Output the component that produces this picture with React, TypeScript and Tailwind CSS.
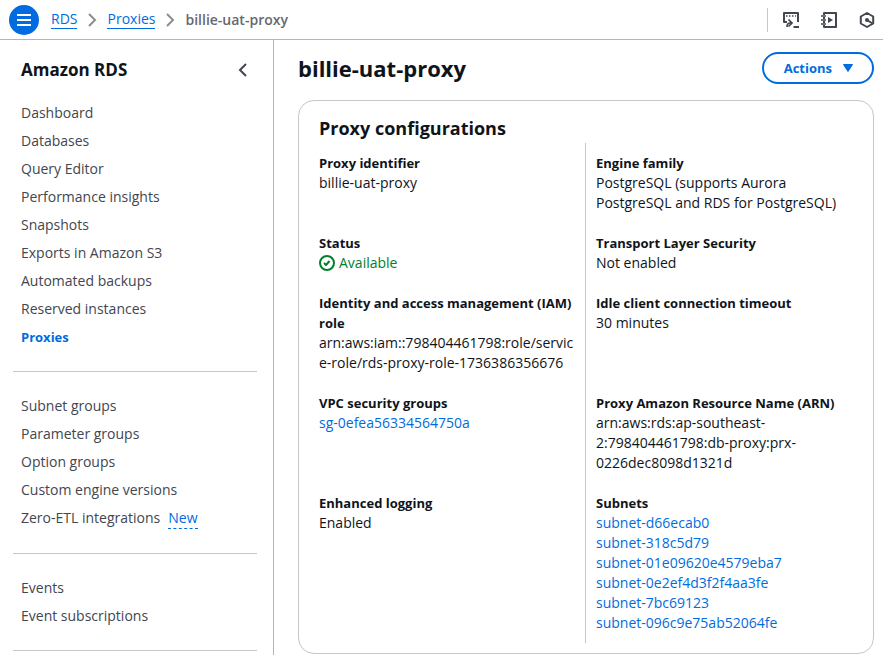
import type { ReactNode } from "react";

type NavItem = { label: string; current?: boolean; isNew?: boolean };

const navSections: NavItem[][] = [
  [
    { label: "Dashboard" },
    { label: "Databases" },
    { label: "Query Editor" },
    { label: "Performance insights" },
    { label: "Snapshots" },
    { label: "Exports in Amazon S3" },
    { label: "Automated backups" },
    { label: "Reserved instances" },
    { label: "Proxies", current: true },
  ],
  [
    { label: "Subnet groups" },
    { label: "Parameter groups" },
    { label: "Option groups" },
    { label: "Custom engine versions" },
    { label: "Zero-ETL integrations", isNew: true },
  ],
  [{ label: "Events" }, { label: "Event subscriptions" }],
];

const subnets = [
  "subnet-d66ecab0",
  "subnet-318c5d79",
  "subnet-01e09620e4579eba7",
  "subnet-0e2ef4d3f2f4aa3fe",
  "subnet-7bc69123",
  "subnet-096c9e75ab52064fe",
];

function Separator() {
  return (
    <svg className="size-4 shrink-0" viewBox="0 0 16 16" fill="none" stroke="#8c8c94" strokeWidth="2" aria-hidden="true">
      <path d="m5 2 6 6-6 6" />
    </svg>
  );
}

function CloudShellIcon() {
  return (
    <svg className="size-4" viewBox="0 0 16 16" fill="none" stroke="currentColor" strokeWidth="2" aria-hidden="true">
      <path d="M4 10H1V1h14v9" strokeLinejoin="round" />
      <path d="M3 4h1.500M6 4h1.500M9 4h1.500M12 4h1" strokeWidth="1.500" />
      <path d="M4 15c0-2.500 1-4 3-4h1.500M5.500 7.500 9 11l-3.500 3.500" strokeWidth="1.700" />
      <path d="M10.500 15H16" />
    </svg>
  );
}

function NotebookIcon() {
  return (
    <svg className="size-4" viewBox="0 0 16 16" fill="none" stroke="currentColor" strokeWidth="2" aria-hidden="true">
      <path d="M3 3V1h12v14H3v-2M3 5v2M3 9v2" strokeLinejoin="round" />
      <path d="M0 4h5M0 8h5M0 12h5" strokeWidth="1.700" />
      <path d="m7 5 5 3-5 3z" fill="currentColor" stroke="none" />
    </svg>
  );
}

function HexagonIcon() {
  return (
    <svg className="size-4" viewBox="0 0 16 16" fill="none" stroke="currentColor" strokeWidth="2" aria-hidden="true">
      <path d="m8 1 6.200 3.500v7L8 15l-6.200-3.500v-7z" strokeLinejoin="round" />
      <circle cx="8" cy="8" r="2" fill="currentColor" stroke="none" />
      <path d="m8 8 5.500 3.500" />
    </svg>
  );
}

function Field({ label, side, children }: { label: string; side: "left" | "right"; children: ReactNode }) {
  return (
    <div className={side === "left" ? "py-2.5 pr-2" : "-ml-px border-l border-[#c6c6cd] py-2.5 pl-2.5"}>
      <dt className="text-[13px] leading-5 font-bold">{label}</dt>
      <dd>{children}</dd>
    </div>
  );
}

export default function App() {
  return (
    <div className="flex min-h-screen flex-col bg-white font-['Open_Sans',sans-serif] text-sm leading-5 text-[#0f141a]">
      <header className="flex h-10 items-center border-b border-[#b4b4bb] pr-2 pl-[9px]">
        <button type="button" aria-label="Open navigation" className="flex size-[30px] shrink-0 items-center justify-center rounded-full bg-[#006ce0] text-white">
          <svg className="size-4" viewBox="0 0 16 16" stroke="currentColor" strokeWidth="2" aria-hidden="true">
            <path d="M1 3h14M1 8h14M1 13h14" />
          </svg>
        </button>
        <nav aria-label="Breadcrumb" className="ml-3 flex grow items-center gap-[7px] leading-[18px]">
          <a href="#rds" className="border-b border-[#006ce0] text-[#006ce0]">RDS</a>
          <Separator />
          <a href="#proxies" className="border-b border-[#006ce0] text-[#006ce0]">Proxies</a>
          <Separator />
          <span className="font-semibold text-[#656871]">billie-uat-proxy</span>
        </nav>
        <div className="flex h-6 items-center gap-[22px] border-l border-[#c6c6cd] pl-[15px] text-[#424650]">
          <button type="button" aria-label="CloudShell"><CloudShellIcon /></button>
          <button type="button" aria-label="Tutorials"><NotebookIcon /></button>
          <button type="button" aria-label="Resource assistant"><HexagonIcon /></button>
        </div>
      </header>

      <div className="flex grow">
        <aside className="w-[274px] shrink-0 border-r border-[#b4b4bb] pr-4 pl-[13px]">
          <div className="flex items-center justify-between pt-[18px] pr-1.5 pb-[21px] pl-2">
            <h2 className="text-[17px] leading-6 font-bold">Amazon RDS</h2>
            <button type="button" aria-label="Close navigation" className="text-[#424650]">
              <svg className="size-4" viewBox="0 0 16 16" fill="none" stroke="currentColor" strokeWidth="2" aria-hidden="true">
                <path d="M11 2 5 8l6 6" />
              </svg>
            </button>
          </div>
          <nav aria-label="Amazon RDS">
            {navSections.map((items) => (
              <ul key={items[0].label} className="mb-6 flex flex-col gap-2 border-b border-[#c6c6cd] pb-6 pl-2">
                {items.map((item) => (
                  <li key={item.label} className="flex gap-2">
                    <a href="#nav" className={item.current ? "text-[13px] leading-5 font-bold text-[#006ce0]" : "text-[#424650]"}>{item.label}</a>
                    {item.isNew && (
                      <button type="button" className="border-b border-dashed border-[#006ce0] text-[#006ce0]">New</button>
                    )}
                  </li>
                ))}
              </ul>
            ))}
          </nav>
        </aside>

        <main className="min-w-0 grow pt-3 pr-[9px] pl-6">
          <div className="flex items-start justify-between">
            <h1 className="text-[22px] leading-8 font-bold">billie-uat-proxy</h1>
            <button type="button" className="flex h-8 items-center gap-2 rounded-full border-2 border-[#006ce0] pr-4 pl-5 text-[13px] leading-5 font-bold text-[#006ce0]">
              Actions
              <svg className="size-4" viewBox="0 0 16 16" fill="currentColor" stroke="currentColor" strokeWidth="1" strokeLinejoin="round" aria-hidden="true">
                <path d="M3.500 4.500h9L8 11.500z" />
              </svg>
            </button>
          </div>
          <section className="mt-4 rounded-2xl border border-[#c6c6cd] px-5 pt-[15px] pb-2.5">
            <h2 className="pb-[3px] text-lg leading-6 font-bold">Proxy configurations</h2>
            <dl className="grid grid-cols-2">
              <Field side="left" label="Proxy identifier">billie-uat-proxy</Field>
              <Field side="right" label="Engine family">PostgreSQL (supports Aurora PostgreSQL and RDS for PostgreSQL)</Field>
              <Field side="left" label="Status">
                <span className="flex items-center gap-1 text-[#00802f]">
                  <svg className="size-4" viewBox="0 0 16 16" fill="none" stroke="currentColor" strokeWidth="2" aria-hidden="true">
                    <circle cx="8" cy="8" r="7" />
                    <path d="m5 8 2 2 3.500-4" strokeLinejoin="round" />
                  </svg>
                  Available
                </span>
              </Field>
              <Field side="right" label="Transport Layer Security">Not enabled</Field>
              <Field side="left" label="Identity and access management (IAM) role">
                <span className="break-all">arn:aws:iam::798404461798:role/service-role/rds-proxy-role-1736386356676</span>
              </Field>
              <Field side="right" label="Idle client connection timeout">30 minutes</Field>
              <Field side="left" label="VPC security groups">
                <a href="#sg" className="text-[#006ce0]">sg-0efea56334564750a</a>
              </Field>
              <Field side="right" label="Proxy Amazon Resource Name (ARN)">arn:aws:rds:ap-southeast-2:798404461798:db-proxy:prx-0226dec8098d1321d</Field>
              <Field side="left" label="Enhanced logging">Enabled</Field>
              <Field side="right" label="Subnets">
                <ul>
                  {subnets.map((id) => (
                    <li key={id}><a href="#subnet" className="text-[#006ce0]">{id}</a></li>
                  ))}
                </ul>
              </Field>
            </dl>
          </section>
        </main>
      </div>
    </div>
  );
}
